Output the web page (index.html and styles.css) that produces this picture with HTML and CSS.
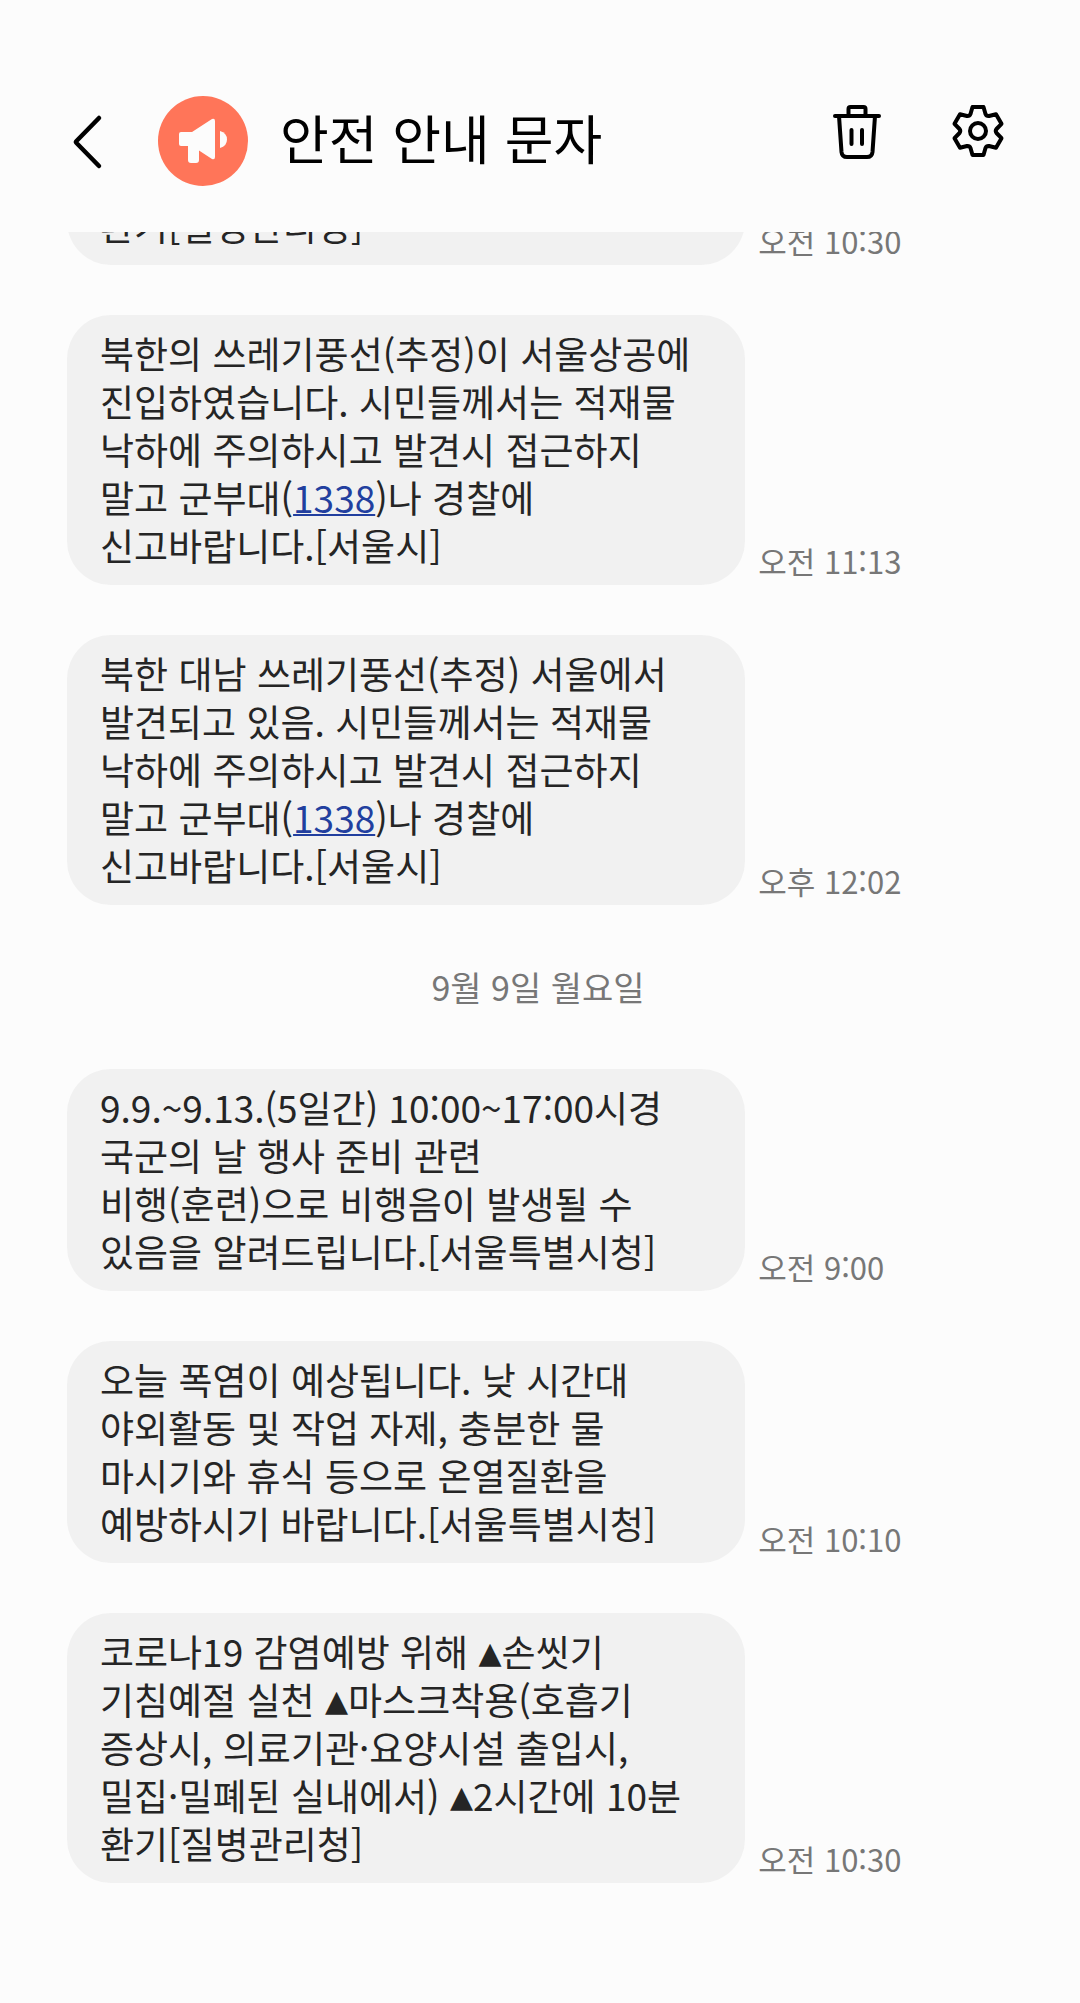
FILE: index.html
```html
<!DOCTYPE html>
<html lang="ko">
<head>
    <meta charset="UTF-8">
    <meta name="viewport" content="width=device-width, initial-scale=1.0">
    <title>안전 안내 문자</title>
    <link rel="stylesheet" href="styles.css">
</head>
<body>
    <header>
        <button class="back-button" type="button" aria-label="뒤로">
            <svg width="36" height="60" viewBox="0 0 36 60" fill="none" stroke="#000" stroke-width="4.500" stroke-linecap="round" stroke-linejoin="round">
                <path d="M30 7 L7.500 30 Q6.500 31 7.500 32 L30 55"/>
            </svg>
        </button>
        <span class="avatar">
            <svg width="90" height="90" viewBox="0 0 90 90" fill="#fcfcfc">
                <path d="M23 36h11l20-13q3-1 3 2v36q0 3-3 2L41 54.500V64q0 3-3 3h-5q-3 0-3-3V50h-7q-2 0-2-2V38q0-2 2-2z"/>
                <path d="M62 35q7 2 7 8.500T62 52z"/>
            </svg>
        </span>
        <h1>안전 안내 문자</h1>
        <div class="actions">
            <button type="button" aria-label="삭제">
                <svg width="60" height="60" viewBox="0 0 60 60" fill="none" stroke="#000" stroke-width="4" stroke-linecap="round" stroke-linejoin="round">
                    <path d="M9 15H53"/>
                    <path d="M22.500 15V8q0-2 2-2h13q2 0 2 2v7"/>
                    <path d="M13 15l2.500 36q.5 5 5.500 5h20q5 0 5.500-5L49 15"/>
                    <path d="M25.500 29V43M36 29V43"/>
                </svg>
            </button>
            <button type="button" aria-label="설정">
                <svg width="60" height="60" viewBox="-30 -30 60 60" fill="none" stroke="#000" stroke-width="4" stroke-linejoin="round">
                    <path d="M-5.500-24H5.500L7.500-17Q8.500-14.700 11-15L18-16.800 23.500-7.200 18.500-2Q17 0 18.500 2L23.500 7.200 18 16.800 11 15Q8.500 14.700 7.500 17L5.500 24H-5.500L-7.500 17Q-8.500 14.700-11 15L-18 16.800-23.500 7.200-18.500 2Q-17 0-18.500-2L-23.500-7.200-18-16.800-11-15Q-8.500-14.700-7.500-17Z"/>
                    <circle r="8"/>
                </svg>
            </button>
        </div>
    </header>

    <main class="messages">
        <div class="message">
            <p class="bubble bubble-end">환기[질병관리청]</p>
            <time>오전 10:30</time>
        </div>
        <div class="message">
            <p class="bubble">북한의 쓰레기풍선(추정)이 서울상공에<br>진입하였습니다. 시민들께서는 적재물<br>낙하에 주의하시고 발견시 접근하지<br>말고 군부대(<a href="tel:1338">1338</a>)나 경찰에<br>신고바랍니다.[서울시]</p>
            <time>오전 11:13</time>
        </div>
        <div class="message">
            <p class="bubble">북한 대남 쓰레기풍선(추정) 서울에서<br>발견되고 있음. 시민들께서는 적재물<br>낙하에 주의하시고 발견시 접근하지<br>말고 군부대(<a href="tel:1338">1338</a>)나 경찰에<br>신고바랍니다.[서울시]</p>
            <time>오후 12:02</time>
        </div>

        <h2 class="date">9월 9일 월요일</h2>

        <div class="message">
            <p class="bubble">9.9.~9.13.(5일간) 10:00~17:00시경<br>국군의 날 행사 준비 관련<br>비행(훈련)으로 비행음이 발생될 수<br>있음을 알려드립니다.[서울특별시청]</p>
            <time>오전 9:00</time>
        </div>
        <div class="message">
            <p class="bubble">오늘 폭염이 예상됩니다. 낮 시간대<br>야외활동 및 작업 자제, 충분한 물<br>마시기와 휴식 등으로 온열질환을<br>예방하시기 바랍니다.[서울특별시청]</p>
            <time>오전 10:10</time>
        </div>
        <div class="message">
            <p class="bubble">코로나19 감염예방 위해 <span class="mark">▲</span>손씻기<br>기침예절 실천 <span class="mark">▲</span>마스크착용(호흡기<br>증상시, 의료기관·요양시설 출입시,<br>밀집·밀폐된 실내에서) <span class="mark">▲</span>2시간에 10분<br>환기[질병관리청]</p>
            <time>오전 10:30</time>
        </div>
    </main>
</body>
</html>
```
FILE: styles.css
```css
* {
    box-sizing: border-box;
}
body {
    font-family: "Noto Sans CJK KR", sans-serif;
    background-color: #fcfcfc;
    color: #252525;
    margin: 0;
    height: 100vh;
    display: flex;
    flex-direction: column;
}
button {
    background: none;
    border: none;
    padding: 0;
    cursor: pointer;
}
svg {
    display: block;
}

/* 상단 바 */
header {
    display: flex;
    align-items: center;
    padding: 96px 72px 46px 69px;
    flex-shrink: 0;
}
.avatar {
    width: 90px;
    height: 90px;
    margin-left: 53px;
    border-radius: 50%;
    background-color: #ff7559;
}
h1 {
    color: #000;
    margin: 0 0 0 32px;
    padding-bottom: 8px;
    font-size: 53px;
    font-weight: 400;
    line-height: 80px;
}
.actions {
    display: flex;
    gap: 62px;
    margin-left: auto;
    align-self: flex-start;
    padding-top: 5px;
}

/* 메시지 목록: 최신 메시지가 아래에 보임 */
.messages {
    flex: 1;
    min-height: 0;
    display: flex;
    flex-direction: column;
    justify-content: flex-end;
    gap: 50px;
    padding: 0 71px 120px 67px;
    overflow: hidden;
}
.message {
    display: flex;
    align-items: flex-end;
    gap: 13px;
    flex-shrink: 0;
}
.bubble {
    width: 72%;
    margin: 0;
    padding: 14px 10px 16px 33px;
    border-radius: 44px;
    background-color: #f1f1f1;
    font-size: 37px;
    line-height: 48px;
    white-space: nowrap;
}
.bubble-end {
    border-radius: 0 0 44px 44px;
}
.bubble a {
    color: #223f9f;
    text-decoration-thickness: 2px;
}
.mark {
    font-family: "DejaVu Sans", sans-serif;
    font-size: 30px;
    line-height: 1;
    vertical-align: 4px;
}
time {
    color: #777;
    padding-bottom: 3px;
    font-size: 31px;
    line-height: 42px;
    white-space: nowrap;
}
.date {
    margin: 8px 0;
    color: #777;
    font-size: 34px;
    font-weight: 400;
    line-height: 48px;
    text-align: center;
}
```
